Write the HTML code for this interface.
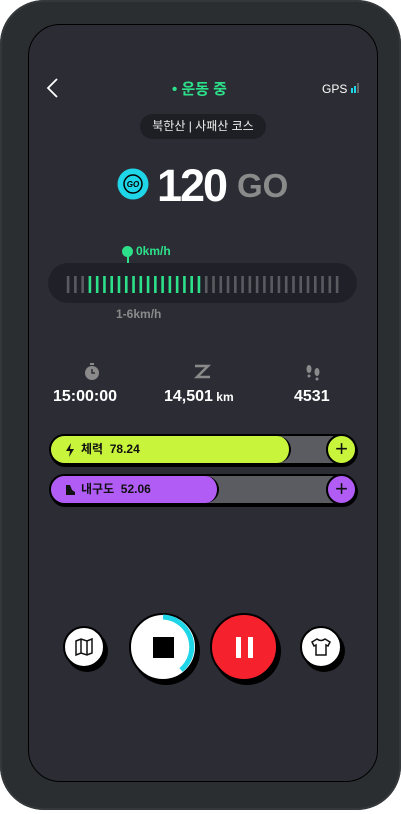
<!DOCTYPE html>
<html><head><meta charset="utf-8"><style>
*{margin:0;padding:0;box-sizing:border-box}
body{width:401px;height:814px;background:#fff;position:relative;overflow:hidden;font-family:"Liberation Sans","Noto Sans CJK KR",sans-serif}
.phone{position:absolute;left:0;top:0;width:401px;height:810px;border-radius:44px;background:#2b2e30;box-shadow:inset 0 0 0 2px #34383a}
.screen{position:absolute;left:28px;top:24px;width:350px;height:758px;border-radius:32px;background:#2c2c35;border:1.5px solid #000}
.abs{position:absolute}
.t{color:#fff;font-weight:bold;white-space:nowrap}
.bar{position:absolute;left:49px;width:308px;height:31px;border-radius:16px;background:#5b5c62;border:2px solid #000;box-shadow:1px 2px 0 #000}
.fill{position:absolute;left:0;top:0;height:27px;border-radius:14px;border-right:2px solid #000;font-size:12px;font-weight:bold;color:#111;padding-left:30px;line-height:27px}
.plus{position:absolute;right:-2px;top:-2px;width:31px;height:31px;border-radius:50%;border:2px solid #000;text-align:center;line-height:26px;font-size:22px;color:#111}
.btn{position:absolute;border-radius:50%;border:2px solid #000;box-shadow:3px 4px 0 #000;display:flex;align-items:center;justify-content:center}
</style></head><body>
<div class="phone"></div>
<div class="screen"></div>
<svg class="abs" style="left:44px;top:78px" width="18" height="22"><path d="M13 1 L4 10 L13 19" stroke="#fff" stroke-width="1.8" fill="none"/></svg>
<div class="abs t" style="left:172px;top:78px;font-size:15px;color:#2de08a">• 운동 중</div>
<div class="abs" style="left:322px;top:82px;font-size:12px;color:#fff">GPS</div>
<div class="abs" style="left:351px;top:88px;width:2px;height:5px;background:#1fd6e8"></div>
<div class="abs" style="left:354px;top:86px;width:2px;height:7px;background:#1fd6e8"></div>
<div class="abs" style="left:357px;top:83px;width:2px;height:10px;background:#666"></div>
<div class="abs" style="left:140px;top:114px;width:126px;height:25px;border-radius:13px;background:#1e1f24;color:#eee;font-size:12px;text-align:center;line-height:25px">북한산 | 사패산 코스</div>
<svg class="abs" style="left:117px;top:168px" width="32" height="32"><circle cx="16" cy="16" r="15.5" fill="#1fd6e8"/><circle cx="16" cy="16" r="9" fill="#1fd6e8" stroke="#000" stroke-width="1.5"/><text x="16" y="19" font-size="8" font-weight="bold" text-anchor="middle" font-family="Liberation Sans" font-style="italic">GO</text></svg>
<div class="abs t" style="left:157px;top:160px;font-size:45px;letter-spacing:-2px">120</div>
<div class="abs" style="left:237px;top:167px;font-size:33px;color:#8a8a8a;font-weight:bold">GO</div>
<div class="abs" style="left:122px;top:246px;width:11px;height:11px;border-radius:50%;background:#2de08a"></div>
<div class="abs" style="left:126.5px;top:252px;width:2px;height:13px;background:#2de08a"></div>
<div class="abs t" style="left:136px;top:244px;font-size:12px;color:#2de08a">0km/h</div>
<div class="abs" style="left:48px;top:263px;width:309px;height:40px;border-radius:20px;background:#202128"></div>
<svg class="abs" style="left:0;top:0" width="401" height="400" id="bars"></svg>
<div class="abs t" style="left:116px;top:307px;font-size:12px;color:#8a8a8a">1-6km/h</div>
<svg class="abs" style="left:84px;top:363px" width="16" height="18"><rect x="6" y="0" width="4" height="2" fill="#8a8a8a"/><circle cx="8" cy="10" r="7" fill="#8a8a8a"/><path d="M8 6 V10 H11" stroke="#2c2c35" stroke-width="1.5" fill="none"/></svg>
<svg class="abs" style="left:193px;top:363px" width="20" height="18"><path d="M2 3 H15 L4 14 H17" stroke="#8a8a8a" stroke-width="2.5" fill="none"/></svg>
<svg class="abs" style="left:304px;top:363px" width="18" height="18"><ellipse cx="5" cy="6" rx="2.5" ry="4" fill="#8a8a8a"/><ellipse cx="13" cy="9" rx="2.5" ry="4" fill="#8a8a8a"/><circle cx="5" cy="13" r="1.5" fill="#8a8a8a"/><circle cx="13" cy="16" r="1.5" fill="#8a8a8a"/></svg>
<div class="abs t" style="left:53px;top:388px;font-size:16px">15:00:00</div>
<div class="abs t" style="left:164px;top:388px;font-size:16px">14,501<span style="font-size:12px"> km</span></div>
<div class="abs t" style="left:294px;top:388px;font-size:16px">4531</div>
<div class="bar" style="top:434px"><div class="fill" style="width:240px;background:#c8f53c">체력 &nbsp;78.24</div><svg class="abs" style="left:14px;top:7px" width="10" height="14"><path d="M6 0 L1 8 H5 L4 14 L9 6 H5 Z" fill="#111"/></svg><div class="plus" style="background:#c8f53c">+</div></div>
<div class="bar" style="top:474px"><div class="fill" style="width:168px;background:#b05cf5">내구도 &nbsp;52.06</div><svg class="abs" style="left:13px;top:8px" width="12" height="12"><path d="M2 1 L6 1 L8 6 L11 8 L11 11 L2 11 Z" fill="#111"/></svg><div class="plus" style="background:#b05cf5">+</div></div>
<div class="btn" style="left:63px;top:626px;width:42px;height:42px;background:#fff"><svg width="20" height="20"><path d="M2 4 L7 2 L13 4 L18 2 V16 L13 18 L7 16 L2 18 Z M7 2 V16 M13 4 V18" stroke="#111" stroke-width="1.5" fill="none"/></svg></div>
<div class="btn" style="left:129px;top:613px;width:68px;height:68px;background:#fff"><svg class="abs" style="left:-2px;top:-2px" width="68" height="68"><path d="M34 4 A30 30 0 0 1 52 57" stroke="#1fd6e8" stroke-width="5" fill="none"/></svg><div style="width:21px;height:21px;background:#000"></div></div>
<div class="btn" style="left:210px;top:613px;width:68px;height:68px;background:#f5222d"><div style="width:5px;height:21px;background:#fff;margin-right:7px"></div><div style="width:5px;height:21px;background:#fff"></div></div>
<div class="btn" style="left:300px;top:626px;width:42px;height:42px;background:#fff"><svg width="22" height="20"><path d="M7 2 L2 5 L4 9 L6 8 V18 H16 V8 L18 9 L20 5 L15 2 Q11 5 7 2 Z" stroke="#111" stroke-width="1.5" fill="none"/></svg></div>
<script>
var s=document.getElementById('bars'),h='';
for(var i=0;i<38;i++){var x=68+i*7.27;var c=(i>=3&&i<=18)?'#2de08a':'#5a5b60';h+='<rect x="'+(x-1.2)+'" y="276" width="2.6" height="17" fill="'+c+'"/>';}
s.innerHTML=h;
</script>
</body></html>
